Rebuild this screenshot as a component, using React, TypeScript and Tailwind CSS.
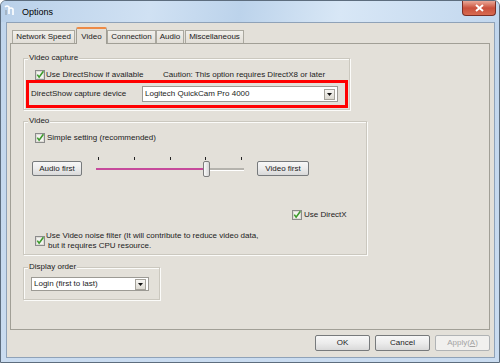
import React from 'react';

const tabs = [
  { label: 'Network Speed', cls: 'ml-[2px] w-[63px]' },
  { label: 'Video', cls: 'ml-[1px] w-[31px]', active: true },
  { label: 'Connection', cls: 'w-[49px]' },
  { label: 'Audio', cls: 'w-[28px]' },
  { label: 'Miscellaneous', cls: 'ml-[1px] w-[59px]' },
];

const CheckBox = () => (
  <svg width="10" height="10" viewBox="0 0 10 10" className="shrink-0">
    <rect x="0.5" y="0.5" width="9" height="9" fill="#f3f3f1" stroke="#8b8b8b" />
    <rect x="1.5" y="1.5" width="7" height="7" fill="none" stroke="#dedcd6" />
    <path d="M2.3 4.6 L4.1 7.1 L8.4 1.2" fill="none" stroke="#3d9b2c" strokeWidth="1.6" />
  </svg>
);

const DropArrow = () => (
  <div className="mr-[2px] flex h-[11px] w-[11px] items-center justify-center border border-[#a6a39b] bg-gradient-to-b from-[#f7f6f3] to-[#dcd9d1]">
    <svg width="5" height="3" viewBox="0 0 5 3">
      <path d="M0 0 H5 L2.5 3 Z" fill="#111" />
    </svg>
  </div>
);

const Button = ({ children, cls }: { children: React.ReactNode; cls: string }) => (
  <div
    className={`flex items-center justify-center rounded-[2px] border border-[#777a7c] bg-gradient-to-b from-[#f7f7f7] via-[#ececec] to-[#d9d9d9] ${cls}`}
  >
    {children}
  </div>
);

const TitleBar = () => (
  <div className="flex h-[21px] shrink-0 items-start bg-[linear-gradient(100deg,#b9d0e9_0%,#d0e1f3_30%,#bcd3eb_48%,#d8e7f6_68%,#c2d7ee_100%)]">
    <svg width="12" height="11" viewBox="0 0 12 11" className="ml-[3px] mt-[4px]">
      <path d="M1 2 Q3 0 5 2 L5 9 M5 4 Q7 2 9 4 L9 10" fill="none" stroke="#ffffff" strokeWidth="1.6" />
      <path d="M2 5 L2 10" stroke="#9aa8b6" strokeWidth="1.4" />
    </svg>
    <span className="ml-[6px] mt-[6px] text-[9px] leading-[10px] text-black">Options</span>
    <div className="ml-auto mr-[3px] flex h-[15px] w-[34px] items-center justify-center rounded-b-[4px] border border-t-0 border-[#7a2e25] bg-gradient-to-b from-[#e9a898] via-[#c9503c] to-[#d86a50]">
      <svg width="9" height="8" viewBox="0 0 9 8">
        <path d="M1 1 L8 7 M8 1 L1 7" stroke="#ffffff" strokeWidth="2" />
      </svg>
    </div>
  </div>
);

export default function App() {
  return (
    <div className="flex h-[363px] w-[500px] flex-col overflow-hidden rounded-t-[6px] border border-[#5d6d7e] bg-gradient-to-b from-[#c0d5ec] to-[#cadcf0] font-['Liberation_Sans',Arial,sans-serif] text-[8px] leading-[10px] text-[#1b1b1b]">
      <TitleBar />
      <div className="mb-[4px] ml-[5px] mr-[4px] flex flex-1 flex-col border border-[#8fa2b8] bg-[#e3e0d9] pl-[3px] pr-[4px] pt-[4px]">
        {/* tabs */}
        <div className="flex h-[16px] items-end">
          {tabs.map((t) =>
            t.active ? (
              <div
                key={t.label}
                className={`relative z-10 -mb-px flex h-[17px] items-center justify-center rounded-t-[2px] border border-b-0 border-[#a09e95] border-t-[2px] border-t-[#ee8a45] bg-[#e3e0d9] ${t.cls}`}
              >
                {t.label}
              </div>
            ) : (
              <div
                key={t.label}
                className={`flex h-[13px] items-center justify-center border border-b-0 border-[#aaa89f] bg-gradient-to-b from-[#f1f0eb] to-[#e1ded7] ${t.cls}`}
              >
                {t.label}
              </div>
            )
          )}
        </div>

        {/* panel */}
        <div className="relative flex h-[287px] flex-col border border-[#a19f96] bg-[#e3e0d9] pl-[12px]">
          {/* Video capture */}
          <div className="mt-[14px] flex h-[52px] w-[327px] flex-col border border-[#cbc8bf] shadow-[inset_1px_1px_0_#fbfbf9,1px_1px_0_#fbfbf9]">
            <span className="-mt-[6px] ml-[4px] w-fit bg-[#e3e0d9] px-[1px]">Video capture</span>
            <div className="mt-[7px] flex h-[10px] items-center pl-[11px]">
              <div className="flex w-[128px] items-center gap-[1px]">
                <CheckBox />
                <span>Use DirectShow if available</span>
              </div>
              <span>Caution: This option requires DirectX8 or later</span>
            </div>
            <div className="ml-[2px] flex h-[28px] w-[322px] items-center border-[3px] border-[#ff0000] pl-[2px]">
              <span className="w-[111px]">DirectShow capture device</span>
              <div className="flex h-[16px] w-[196px] items-center justify-between border border-[#9c9a94] bg-white pl-[2px]">
                <span>Logitech QuickCam Pro 4000</span>
                <DropArrow />
              </div>
            </div>
          </div>

          {/* Video */}
          <div className="mt-[11px] flex h-[134px] w-[344px] flex-col border border-[#cbc8bf] shadow-[inset_1px_1px_0_#fbfbf9,1px_1px_0_#fbfbf9]">
            <span className="-mt-[6px] ml-[4px] w-fit bg-[#e3e0d9] px-[1px]">Video</span>
            <div className="mt-[7px] flex h-[10px] items-center gap-[2px] pl-[11px]">
              <CheckBox />
              <span>Simple setting (recommended)</span>
            </div>
            <div className="mt-[14px] flex items-start pl-[8px]">
              <Button cls="mt-[4px] h-[15px] w-[50px]">Audio first</Button>
              <div className="ml-[14px] flex w-[148px] flex-col">
                <div className="flex h-[4px] justify-between px-[2px]">
                  <div className="h-[3px] w-px bg-[#222]" />
                  <div className="h-[3px] w-px bg-[#222]" />
                  <div className="h-[3px] w-px bg-[#222]" />
                  <div className="h-[3px] w-px bg-[#222]" />
                  <div className="h-[3px] w-px bg-[#222]" />
                </div>
                <div className="flex h-[16px] items-center">
                  <div className="h-[2px] w-[107px] bg-[#c64a9b]" />
                  <div className="h-[16px] w-[7px] rounded-[2px] border border-[#7c7c7c] bg-gradient-to-r from-[#fafafa] to-[#d6d6d6]" />
                  <div className="h-[3px] flex-1 border-b border-white bg-[#b5b3ad]" />
                </div>
              </div>
              <Button cls="ml-[13px] mt-[4px] h-[15px] w-[52px]">Video first</Button>
            </div>
            <div className="mt-[33px] flex h-[10px] items-center gap-[2px] pl-[268px]">
              <CheckBox />
              <span>Use DirectX</span>
            </div>
            <div className="mt-[11px] flex items-center gap-[1px] pl-[11px]">
              <CheckBox />
              <div className="flex flex-col">
                <span>Use Video noise filter (It will contribute to reduce video data,</span>
                <span className="pl-[2px]">but it requires CPU resource.</span>
              </div>
            </div>
          </div>

          {/* Display order */}
          <div className="mt-[12px] flex h-[33px] w-[137px] flex-col border border-[#cbc8bf] shadow-[inset_1px_1px_0_#fbfbf9,1px_1px_0_#fbfbf9]">
            <span className="-mt-[6px] ml-[4px] w-fit bg-[#e3e0d9] px-[1px]">Display order</span>
            <div className="ml-[7px] mt-[5px] flex h-[14px] w-[118px] items-center justify-between border border-[#9c9a94] bg-white pl-[2px]">
              <span>Login (first to last)</span>
              <DropArrow />
            </div>
          </div>
        </div>

        {/* dialog buttons */}
        <div className="mt-[5px] flex justify-end gap-[5px]">
          <Button cls="h-[16px] w-[55px]">OK</Button>
          <Button cls="h-[16px] w-[55px]">Cancel</Button>
          <div className="flex h-[16px] w-[55px] items-center justify-center rounded-[2px] border border-[#b0b3b5] bg-[#f1f0ee] text-[#a3a3a3]">
            Apply(<span className="underline">A</span>)
          </div>
        </div>
      </div>
    </div>
  );
}
